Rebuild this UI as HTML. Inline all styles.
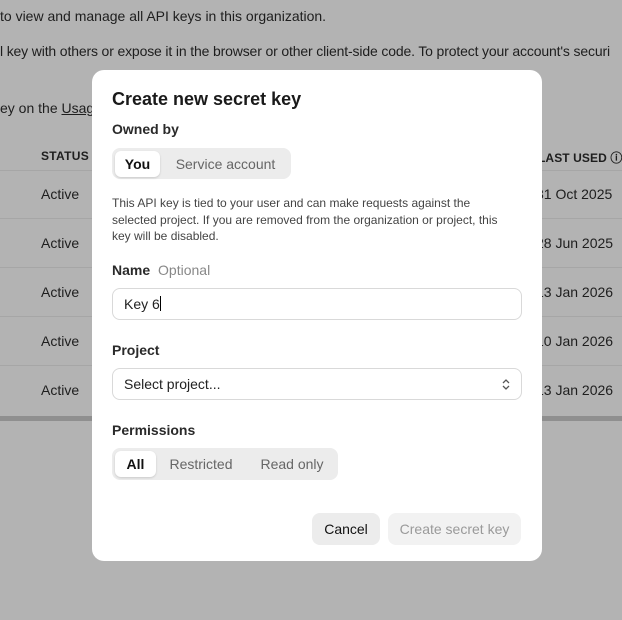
<!DOCTYPE html>
<html><head><style>
*{box-sizing:border-box;margin:0;padding:0}
body{width:622px;height:620px;background:#b3b3b3;font-family:"Liberation Sans",sans-serif;position:relative;overflow:hidden;color:#1a1a1a}
.bg{position:absolute;font-size:14px;color:#1e1e1e;white-space:nowrap}
.line{position:absolute;left:0;width:622px;height:1px;background:#a6a6a6}
.modal{position:absolute;left:92px;top:70px;width:450px;height:491px;background:#fff;border-radius:12px}
.m{position:absolute;white-space:nowrap}
.lbl{font-size:14px;font-weight:bold;color:#2a2a2a}
.seg{position:absolute;background:#ececec;border-radius:8px}
.seg span{position:absolute;top:3px;height:26px;line-height:26px;font-size:14px;color:#666;text-align:center}
.seg span.on{background:#fff;color:#111;border-radius:6px;box-shadow:0 1px 2px rgba(0,0,0,.15);font-weight:bold}
.inp{position:absolute;left:20px;width:410px;height:32px;border:1px solid #d9d9d9;border-radius:8px;font-size:14px;line-height:30px;padding-left:11px;color:#222}
.btn{position:absolute;height:32px;line-height:32px;border-radius:8px;font-size:14px;text-align:center}
</style></head><body>
<div class="bg" style="left:0;top:8px">to view and manage all API keys in this organization.</div>
<div class="bg" style="left:0;top:43px;letter-spacing:-0.15px">l key with others or expose it in the browser or other client-side code. To protect your account's securi</div>
<div class="bg" style="left:0;top:100px">ey on the <u>Usage</u></div>
<div class="bg" style="left:41px;top:149px;font-size:12px;font-weight:bold;letter-spacing:.3px">STATUS</div>
<div class="bg" style="left:538px;top:149px;font-size:12px;font-weight:bold;letter-spacing:.1px">LAST USED ⓘ</div>
<div class="line" style="top:170px"></div>
<div class="bg" style="left:536px;top:186px">31 Oct 2025</div><div class="bg" style="left:41px;top:186px">Active</div>
<div class="line" style="top:218px"></div>
<div class="bg" style="left:41px;top:235px">Active</div><div class="bg" style="left:536px;top:235px">28 Jun 2025</div>
<div class="line" style="top:267px"></div>
<div class="bg" style="left:41px;top:284px">Active</div><div class="bg" style="left:536px;top:284px">13 Jan 2026</div>
<div class="line" style="top:316px"></div>
<div class="bg" style="left:41px;top:333px">Active</div><div class="bg" style="left:536px;top:333px">10 Jan 2026</div>
<div class="line" style="top:365px"></div>
<div class="bg" style="left:41px;top:382px">Active</div><div class="bg" style="left:536px;top:382px">13 Jan 2026</div>
<div style="position:absolute;left:0;top:416px;width:622px;height:5px;background:#8f8f8f"></div>

<div class="modal">
<div class="m" style="left:20px;top:19px;font-size:18px;font-weight:bold;color:#1a1a1a">Create new secret key</div>
<div class="m lbl" style="left:20px;top:51px">Owned by</div>
<div class="seg" style="left:20px;top:78px;width:179px;height:31px">
<span class="on" style="left:3px;width:45px">You</span><span style="left:50px;width:127px">Service account</span></div>
<div class="m" style="left:20px;top:125px;font-size:12px;line-height:16.5px;color:#444;white-space:normal;width:410px">This API key is tied to your user and can make requests against the<br>selected project. If you are removed from the organization or project, this<br>key will be disabled.</div>
<div class="m lbl" style="left:20px;top:192px">Name <span style="font-weight:normal;color:#888;margin-left:4px">Optional</span></div>
<div class="inp" style="top:218px">Key 6<span style="display:inline-block;width:1px;height:15px;background:#000;vertical-align:-2px"></span></div>
<div class="m lbl" style="left:20px;top:272px">Project</div>
<div class="inp" style="top:298px">Select project...
<svg style="position:absolute;right:10px;top:9px" width="10" height="13" viewBox="0 0 10 13"><path d="M2 5L5 2L8 5M2 8L5 11L8 8" fill="none" stroke="#555" stroke-width="1.3"/></svg></div>
<div class="m lbl" style="left:20px;top:352px">Permissions</div>
<div class="seg" style="left:20px;top:378px;width:226px;height:32px">
<span class="on" style="left:3px;width:41px">All</span><span style="left:46px;width:86px">Restricted</span><span style="left:136px;width:88px">Read only</span></div>
<div class="btn" style="left:220px;top:443px;width:68px;background:#ececec;color:#111">Cancel</div>
<div class="btn" style="left:296px;top:443px;width:133px;background:#f2f2f2;color:#9a9a9a">Create secret key</div>
</div>
</body></html>
